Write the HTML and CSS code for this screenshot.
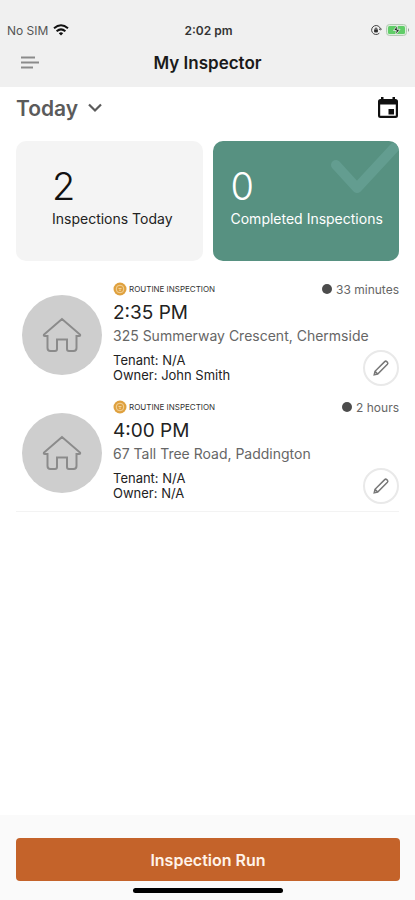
FILE: index.html
```html
<!DOCTYPE html>
<html lang="en">
<head>
<meta charset="utf-8">
<meta name="viewport" content="width=device-width, initial-scale=1">
<title>My Inspector</title>
<link rel="stylesheet" href="styles.css">
</head>
<body>
<svg class="defs" aria-hidden="true">
  <symbol id="house" viewBox="0 0 40 36">
    <path d="M20 2 2 17.500q-.7 1.500 1 1.500H5.500V31q0 3 3 3H13q2 0 2-2V22.500h10V32q0 2 2 2h4.500q3 0 3-3V19H37q1.700 0 1-1.500Z"/>
  </symbol>
  <symbol id="pencil" viewBox="0 0 18 18">
    <path d="M2.200 15.800 3 12.300 12.700 2.600q1-.9 2 0l.7.700q.9 1 0 2L5.700 15ZM3 12.300 5.700 15"/>
  </symbol>
  <symbol id="routine" viewBox="0 0 14 14">
    <circle cx="7" cy="7" r="6.500" fill="#dfa13f"/>
    <circle cx="7" cy="7" r="3.800" fill="none" stroke="#f3d39b"/>
    <path d="M5.500 6.500h3M6 8.200h2" fill="none" stroke="#f3d39b"/>
  </symbol>
</svg>
<header class="header">
  <div class="status">
    <div class="carrier">No SIM
      <svg width="16" height="12" viewBox="0 0 16 12" fill="none" stroke="#111" stroke-width="2"><path d="M1 4.300q7-6 14 0M3.600 7.200q4.400-3.700 8.800 0"/><path d="M8 11.500 5.800 9.200q2.200-1.700 4.400 0Z" fill="#111" stroke="none"/></svg>
    </div>
    <div class="clock">2:02 pm</div>
    <div class="indicators">
      <svg width="12" height="12" viewBox="0 0 12 12" fill="none" stroke="#444"><path d="M10.500 5A4.500 4.500 0 1 0 9.300 9.200M9 5l1.500 1L12 4.500"/><path d="M4.500 5.800h3v2.200h-3Z" fill="#222"/><path d="M5 5.500V4.500q1-1.200 2 0v1"/></svg>
      <svg width="24" height="12" viewBox="0 0 24 12"><rect x=".5" y=".5" width="20" height="11" rx="3" fill="#dcefdc" stroke="#b5c9b5"/><rect x="2" y="2" width="17" height="8" rx="1.500" fill="#60cd68"/><path d="M11.800 1 7.500 6.500h2.800l-.8 4.500L14 5.300h-3Z" fill="#222" stroke="#eff7ef" stroke-width=".8"/><path d="M22 4q2 2 0 4Z" fill="#8b988b"/></svg>
    </div>
  </div>
  <div class="navbar">
    <button class="icon-button menu" aria-label="Menu"><svg width="20" height="14" viewBox="0 0 20 14" stroke="#8b8b8b" stroke-width="2"><path d="M1 1.500h14M1 6.500h18M1 11.500h12"/></svg></button>
    <h1>My Inspector</h1>
  </div>
</header>
<main class="content">
  <div class="filter">
    <button class="period">Today <svg width="14" height="10" viewBox="0 0 14 10" fill="none" stroke="#5b5b5b" stroke-width="2.200"><path d="m1 1.500 6 6 6-6"/></svg></button>
    <button class="icon-button" aria-label="Calendar"><svg width="22" height="24" viewBox="0 0 22 24"><path fill="#101010" fill-rule="evenodd" d="M4 1h2.500v2h9V1H18v2h.5Q21 3 21 5.500v14q0 2.500-2.500 2.500h-15Q1 22 1 19.500v-14Q1 3 3.500 3H4ZM3.200 8.500v11.300h15.600V8.500ZM11.500 13H17v5.500h-5.500Z"/></svg></button>
  </div>
  <section class="summary">
    <div class="card today"><strong>2</strong><span>Inspections Today</span></div>
    <div class="card done">
      <svg class="tick" viewBox="0 0 70 56" fill="none" stroke="#639d90" stroke-width="10" stroke-linecap="round" stroke-linejoin="round"><path d="m7 24 21 23L66 6"/></svg>
      <strong>0</strong><span>Completed Inspections</span>
    </div>
  </section>
  <ul class="list">
    <li class="item">
      <div class="avatar"><svg width="40" height="36"><use href="#house"/></svg></div>
      <div class="details">
        <div class="top"><span class="kind"><svg width="14" height="14"><use href="#routine"/></svg>ROUTINE INSPECTION</span><span class="due">33 minutes</span></div>
        <h2>2:35 PM</h2>
        <p class="address">325 Summerway Crescent, Chermside</p>
        <div class="bottom"><p>Tenant: N/A<br>Owner: John Smith</p><button class="edit" aria-label="Edit inspection"><svg width="18" height="18"><use href="#pencil"/></svg></button></div>
      </div>
    </li>
    <li class="item">
      <div class="avatar"><svg width="40" height="36"><use href="#house"/></svg></div>
      <div class="details">
        <div class="top"><span class="kind"><svg width="14" height="14"><use href="#routine"/></svg>ROUTINE INSPECTION</span><span class="due">2 hours</span></div>
        <h2>4:00 PM</h2>
        <p class="address">67 Tall Tree Road, Paddington</p>
        <div class="bottom"><p>Tenant: N/A<br>Owner: N/A</p><button class="edit" aria-label="Edit inspection"><svg width="18" height="18"><use href="#pencil"/></svg></button></div>
      </div>
    </li>
  </ul>
</main>
<footer class="footer">
  <button class="run">Inspection Run</button>
  <div class="home"></div>
</footer>
</body>
</html>
```
FILE: styles.css
```css
* { box-sizing: border-box; }
body {
  margin: 0;
  min-height: 100vh;
  display: flex;
  flex-direction: column;
  background: #fff;
  color: #222;
  font-family: Inter, "Liberation Sans", sans-serif;
}
h1, h2, p, ul { margin: 0; padding: 0; }
button { border: 0; padding: 0; font: inherit; cursor: pointer; }
svg { display: block; }
.defs { position: absolute; width: 0; height: 0; }

.header { background: #f0f0f0; padding-top: 21px; }
.status {
  display: grid;
  grid-template-columns: 1fr auto 1fr;
  align-items: center;
  height: 18px;
  padding: 0 5px 0 7px;
  font-size: 12px;
}
.carrier { display: flex; align-items: center; gap: 5px; color: #555; }
.clock { font-weight: 600; color: #333; }
.indicators { display: flex; align-items: center; justify-content: flex-end; gap: 4px; }
.navbar {
  display: grid;
  grid-template-columns: 1fr auto 1fr;
  align-items: center;
  height: 48px;
  padding: 0 20px;
}
.navbar h1 { font-size: 17px; font-weight: 600; line-height: 24px; color: #1a1a1a; }
.icon-button { background: none; }
.menu { justify-self: start; }

.content { flex: 1; padding: 0 16px; }
.filter { display: flex; align-items: center; justify-content: space-between; height: 42px; }
.period {
  display: flex;
  align-items: center;
  gap: 10px;
  background: none;
  color: #5b5b5b;
  font-size: 21px;
  font-weight: 600;
}
.summary { display: grid; grid-template-columns: 1fr 1fr; gap: 10px; padding-top: 12px; }
.card {
  position: relative;
  height: 120px;
  padding: 24px 0 0 18px;
  border-radius: 10px;
  background: #f4f4f4;
  overflow: hidden;
  white-space: nowrap;
}
.card.today { padding-left: 36px; }
.card strong, .card span { position: relative; display: block; }
.card strong { font-size: 38px; font-weight: 300; line-height: 42px; color: #111; }
.card span { font-size: 14px; line-height: 24px; }
.card.done { background: #579181; }
.card.done strong, .card.done span { color: #fff; }
.tick { position: absolute; top: 0; right: 0; width: 70px; height: 56px; }

.list { list-style: none; margin-top: 19px; border-bottom: 1px solid #f3f3f3; }
.item { display: flex; gap: 11px; height: 118px; padding-left: 6px; }
.item:last-child { height: 113px; }
.avatar {
  display: grid;
  place-items: center;
  flex: none;
  width: 80px;
  height: 80px;
  margin-top: 15px;
  border-radius: 50%;
  background: #cecece;
  fill: none;
  stroke: #8b8b8b;
  stroke-width: 2;
}
.details { flex: 1; min-width: 0; }
.top { display: flex; justify-content: space-between; align-items: center; height: 18px; }
.kind { display: flex; align-items: center; gap: 2px; font-size: 8px; color: #333; }
.due { display: flex; align-items: center; gap: 4px; font-size: 12px; color: #666; }
.due::before { content: ""; width: 10px; height: 10px; border-radius: 50%; background: #4c4c4c; }
.item h2 { font-size: 19px; font-weight: 400; line-height: 30px; color: #222; }
.address { font-size: 14px; line-height: 15px; color: #666; white-space: nowrap; }
.bottom { display: flex; justify-content: space-between; padding-top: 7px; }
.bottom p { padding-top: 3px; font-size: 13px; line-height: 15px; }
.edit {
  display: grid;
  place-items: center;
  width: 36px;
  height: 36px;
  border: 2px solid #e9e9e9;
  border-radius: 50%;
  background: #fff;
  fill: none;
  stroke: #777;
  stroke-width: 1.5;
}

.footer { padding: 23px 15px 7px 16px; background: #fafafa; }
.run {
  display: block;
  width: 100%;
  height: 43px;
  border-radius: 4px;
  background: #c4632a;
  color: #fff3e9;
  font-size: 16px;
  font-weight: 600;
}
.home { width: 150px; height: 5px; margin: 7px auto 0; border-radius: 3px; background: #000; }
```
